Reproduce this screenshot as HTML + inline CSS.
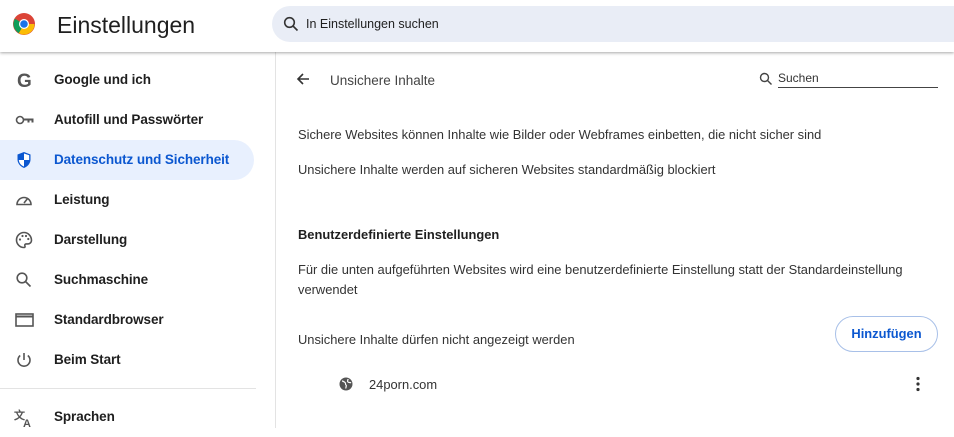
<!DOCTYPE html>
<html><head><meta charset="utf-8"><style>
*{box-sizing:border-box;margin:0;padding:0}
body{width:954px;height:428px;overflow:hidden;background:#fff;font-family:"Liberation Sans",sans-serif;color:#1f1f1f;position:relative}
.hdr{position:absolute;left:0;top:0;width:954px;height:52px;background:#fff;box-shadow:0 1px 3px rgba(0,0,0,.35);z-index:2}
.title{position:absolute;left:57px;top:12px;font-size:23px;color:#1f1f1f}
.search{position:absolute;left:272px;top:6px;width:700px;height:36px;background:#e9edf6;border-radius:18px}
.search span{position:absolute;left:34px;top:11px;font-size:12.5px;color:#1f1f1f}
.side{position:absolute;left:0;top:52px;width:276px;height:376px;border-right:1px solid #e3e3e3}
.item{position:absolute;left:0;height:40px;width:254px;font-size:13.5px;font-weight:bold;color:#1f1f1f;letter-spacing:-0.1px}
.item .t{position:absolute;left:54px;top:12px}
.item svg{position:absolute;left:14px;top:10px}
.sel{background:#e8f0fe;border-radius:0 20px 20px 0;color:#0b57d0}
.main{position:absolute;left:277px;top:52px;width:677px;height:376px;font-size:12.9px;color:#333}
.abs{position:absolute}
</style></head><body>
<div class="hdr">
<svg class="abs" style="left:12px;top:12px" width="24" height="24" viewBox="0 0 24 24">
<circle cx="12" cy="12" r="11" fill="#db4437"/>
<path d="M12 12 L22.5 12 A10.5 10.5 0 0 1 6.75 21.1Z" fill="#fbbc05"/>
<path d="M12 12 L6.75 21.1 A10.5 10.5 0 0 1 2.9 6.75 Z" fill="#0f9d58"/>
<circle cx="12" cy="12" r="5" fill="#fff"/><circle cx="12" cy="12" r="3.8" fill="#1a73e8"/></svg>
<div class="title">Einstellungen</div>
<div class="search"><svg class="abs" style="left:11px;top:10px" width="16" height="16" viewBox="0 0 16 16"><circle cx="6.5" cy="6.5" r="4.8" fill="none" stroke="#333" stroke-width="1.6"/><path d="M10 10l4.5 4.5" stroke="#333" stroke-width="1.6"/></svg><span>In Einstellungen suchen</span></div>
</div>
<div class="side">
<div class="item" style="top:8px"><svg width="22" height="20" viewBox="0 0 20 20"><text x="2" y="17" font-size="19" font-weight="bold" fill="#555" font-family="Liberation Sans">G</text></svg><span class="t">Google und ich</span></div>
<div class="item" style="top:48px"><svg width="22" height="20" viewBox="0 0 22 20"><circle cx="6" cy="10" r="3.5" fill="none" stroke="#555" stroke-width="1.6"/><path d="M9.5 8.5h10v4h-2v-2h-2v2h-2v-2h-4z" fill="#555"/></svg><span class="t">Autofill und Passwörter</span></div>
<div class="item sel" style="top:88px"><svg width="20" height="20" viewBox="0 0 20 20"><path d="M10 2l6.5 2.5v5c0 4-3 7-6.5 8.5C6.5 16.5 3.5 13.5 3.5 9.5v-5z" fill="#0b57d0"/><path d="M10 3.5v6.5h5.2v-0.5c0-.3 0-3.8 0-4.2z M10 10H4.8c.3 3.2 2.5 5.5 5.2 6.5z" fill="#fff"/></svg><span class="t">Datenschutz und Sicherheit</span></div>
<div class="item" style="top:128px"><svg width="20" height="20" viewBox="0 0 20 20"><path d="M3 14.5a7 7 0 1 1 14 0z" fill="none" stroke="#555" stroke-width="1.6"/><path d="M10 13l4-5" stroke="#555" stroke-width="1.6"/></svg><span class="t">Leistung</span></div>
<div class="item" style="top:168px"><svg width="20" height="20" viewBox="0 0 20 20"><path d="M10 2.5a7.5 7.5 0 0 0 0 15c1 0 1.3-.8.9-1.6-.5-1 .2-2 1.2-2h2a3.5 3.5 0 0 0 3.4-3.5C17.5 6 14 2.5 10 2.5z" fill="none" stroke="#555" stroke-width="1.6"/><circle cx="6" cy="9.5" r="1.1" fill="#555"/><circle cx="8.5" cy="6" r="1.1" fill="#555"/><circle cx="12" cy="6" r="1.1" fill="#555"/><circle cx="14.3" cy="9" r="1.1" fill="#555"/></svg><span class="t">Darstellung</span></div>
<div class="item" style="top:208px"><svg width="20" height="20" viewBox="0 0 20 20"><circle cx="8" cy="8" r="4.8" fill="none" stroke="#555" stroke-width="1.6"/><path d="M11.5 11.5l5 5" stroke="#555" stroke-width="1.6"/></svg><span class="t">Suchmaschine</span></div>
<div class="item" style="top:248px"><svg width="22" height="20" viewBox="0 0 22 20"><rect x="2" y="4" width="17" height="12" fill="none" stroke="#555" stroke-width="1.6"/><path d="M2 6.5h17" stroke="#555" stroke-width="2"/></svg><span class="t">Standardbrowser</span></div>
<div class="item" style="top:288px"><svg width="20" height="20" viewBox="0 0 20 20"><path d="M10 3v7" stroke="#555" stroke-width="1.6"/><path d="M6.2 5.5a6 6 0 1 0 7.6 0" fill="none" stroke="#555" stroke-width="1.6"/></svg><span class="t">Beim Start</span></div>
<div class="abs" style="left:0;top:336px;width:256px;height:1px;background:#e3e3e3"></div>
<div class="item" style="top:345px"><svg width="22" height="22" viewBox="0 0 22 22"><text x="0" y="12" font-size="11" fill="#555" font-family="Liberation Sans">文</text><text x="9" y="20" font-size="11" fill="#555" font-family="Liberation Sans">A</text></svg><span class="t">Sprachen</span></div>
</div>
<div class="main">
<svg class="abs" style="left:18px;top:19px" width="16" height="16" viewBox="0 0 16 16"><path d="M14 8H3M8 3L3 8l5 5" fill="none" stroke="#333" stroke-width="1.6"/></svg>
<div class="abs" style="left:53px;top:21px;font-size:13.5px;color:#444">Unsichere Inhalte</div>
<svg class="abs" style="left:482px;top:20px" width="14" height="14" viewBox="0 0 14 14"><circle cx="5.5" cy="5.5" r="4" fill="none" stroke="#444" stroke-width="1.4"/><path d="M8.5 8.5l4 4" stroke="#444" stroke-width="1.4"/></svg>
<div class="abs" style="left:501px;top:19px;font-size:12px;color:#333">Suchen</div>
<div class="abs" style="left:501px;top:35px;width:160px;height:1px;background:#444"></div>
<div class="abs" style="left:21px;top:75px">Sichere Websites können Inhalte wie Bilder oder Webframes einbetten, die nicht sicher sind</div>
<div class="abs" style="left:21px;top:110px">Unsichere Inhalte werden auf sicheren Websites standardmäßig blockiert</div>
<div class="abs" style="left:21px;top:175px;font-weight:bold;color:#1f1f1f">Benutzerdefinierte Einstellungen</div>
<div class="abs" style="left:21px;top:208px;width:640px;line-height:20px">Für die unten aufgeführten Websites wird eine benutzerdefinierte Einstellung statt der Standardeinstellung verwendet</div>
<div class="abs" style="left:21px;top:280px">Unsichere Inhalte dürfen nicht angezeigt werden</div>
<div class="abs" style="left:558px;top:264px;width:103px;height:36px;border:1px solid #a8c0e8;border-radius:18px;color:#0b57d0;font-weight:bold;text-align:center;line-height:34px">Hinzufügen</div>
<svg class="abs" style="left:62px;top:325px" width="14" height="14" viewBox="0 0 14 14"><circle cx="7" cy="7" r="6.5" fill="#555"/><path d="M3 4c1.5 0 2 1 3 1.5s0 2 1 2.5-.5 2 0 3.5M9 2c0 1.5-1 2 0 3s2 0 3 1" fill="none" stroke="#fff" stroke-width="1.2"/></svg>
<div class="abs" style="left:92px;top:325px">24porn.com</div>
<svg class="abs" style="left:637px;top:324px" width="8" height="16" viewBox="0 0 8 16"><circle cx="4" cy="2.5" r="1.6" fill="#333"/><circle cx="4" cy="8" r="1.6" fill="#333"/><circle cx="4" cy="13.5" r="1.6" fill="#333"/></svg>
</div>
</body></html>
